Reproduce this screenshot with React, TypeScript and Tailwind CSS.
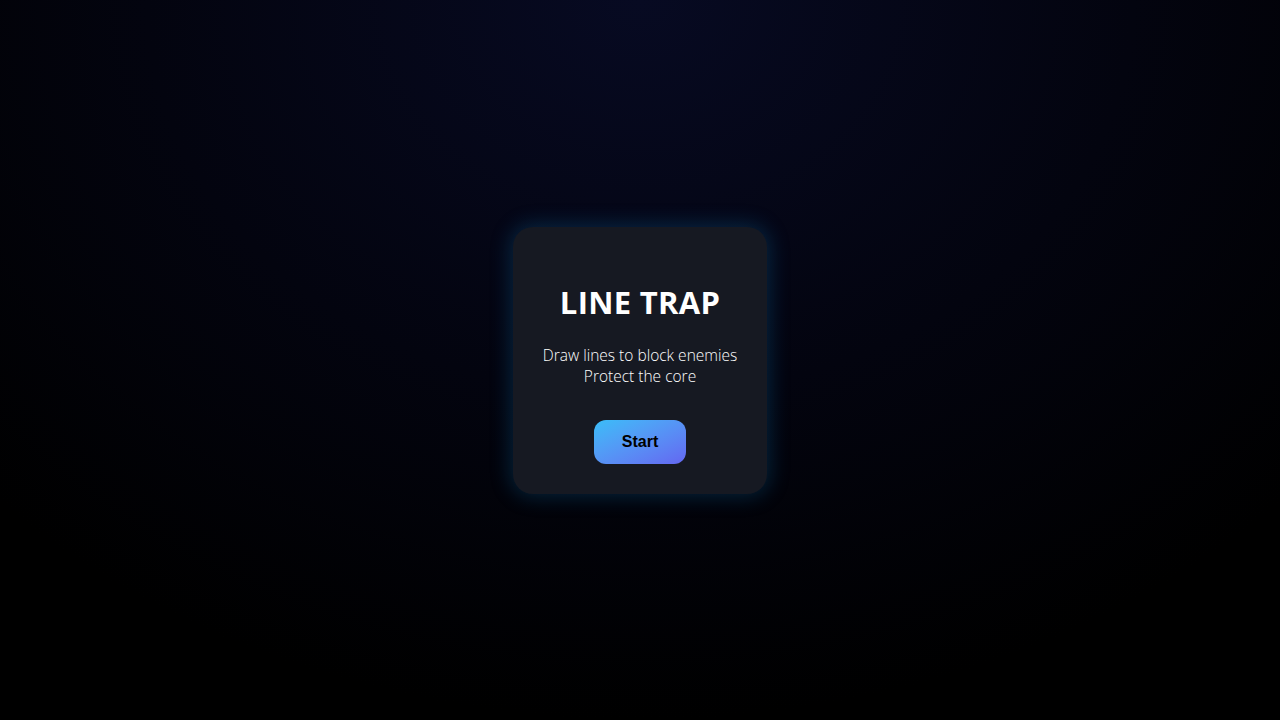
export default function App() {
  return (
    <div className="flex h-[720px] w-[1280px] items-center justify-center bg-[radial-gradient(ellipse_70%_100%_at_50%_0%,#070a22_0%,#03040f_55%,#000000_100%)]">
      <div className="flex w-[254px] flex-col items-center rounded-[20px] bg-[#161922] px-6 pb-[30px] pt-[55px] text-center shadow-[0_0_20px_3px_rgba(14,120,180,0.28)]">
        <h1 className="font-['Open_Sans',sans-serif] text-[31px] font-bold leading-[40px] tracking-[0.3px] text-white">
          LINE TRAP
        </h1>
        <p className="mt-[23px] font-['Open_Sans',sans-serif] text-[15.5px] font-light leading-[21px] text-white">
          Draw lines to block enemies
          <br />
          Protect the core
        </p>
        <button
          type="button"
          className="mt-[33px] h-[44px] w-[92px] rounded-[12px] bg-gradient-to-br from-[#38bdf8] to-[#6366f1] font-['Liberation_Sans',Arial,sans-serif] text-[16px] font-bold text-black"
        >
          Start
        </button>
      </div>
    </div>
  );
}
